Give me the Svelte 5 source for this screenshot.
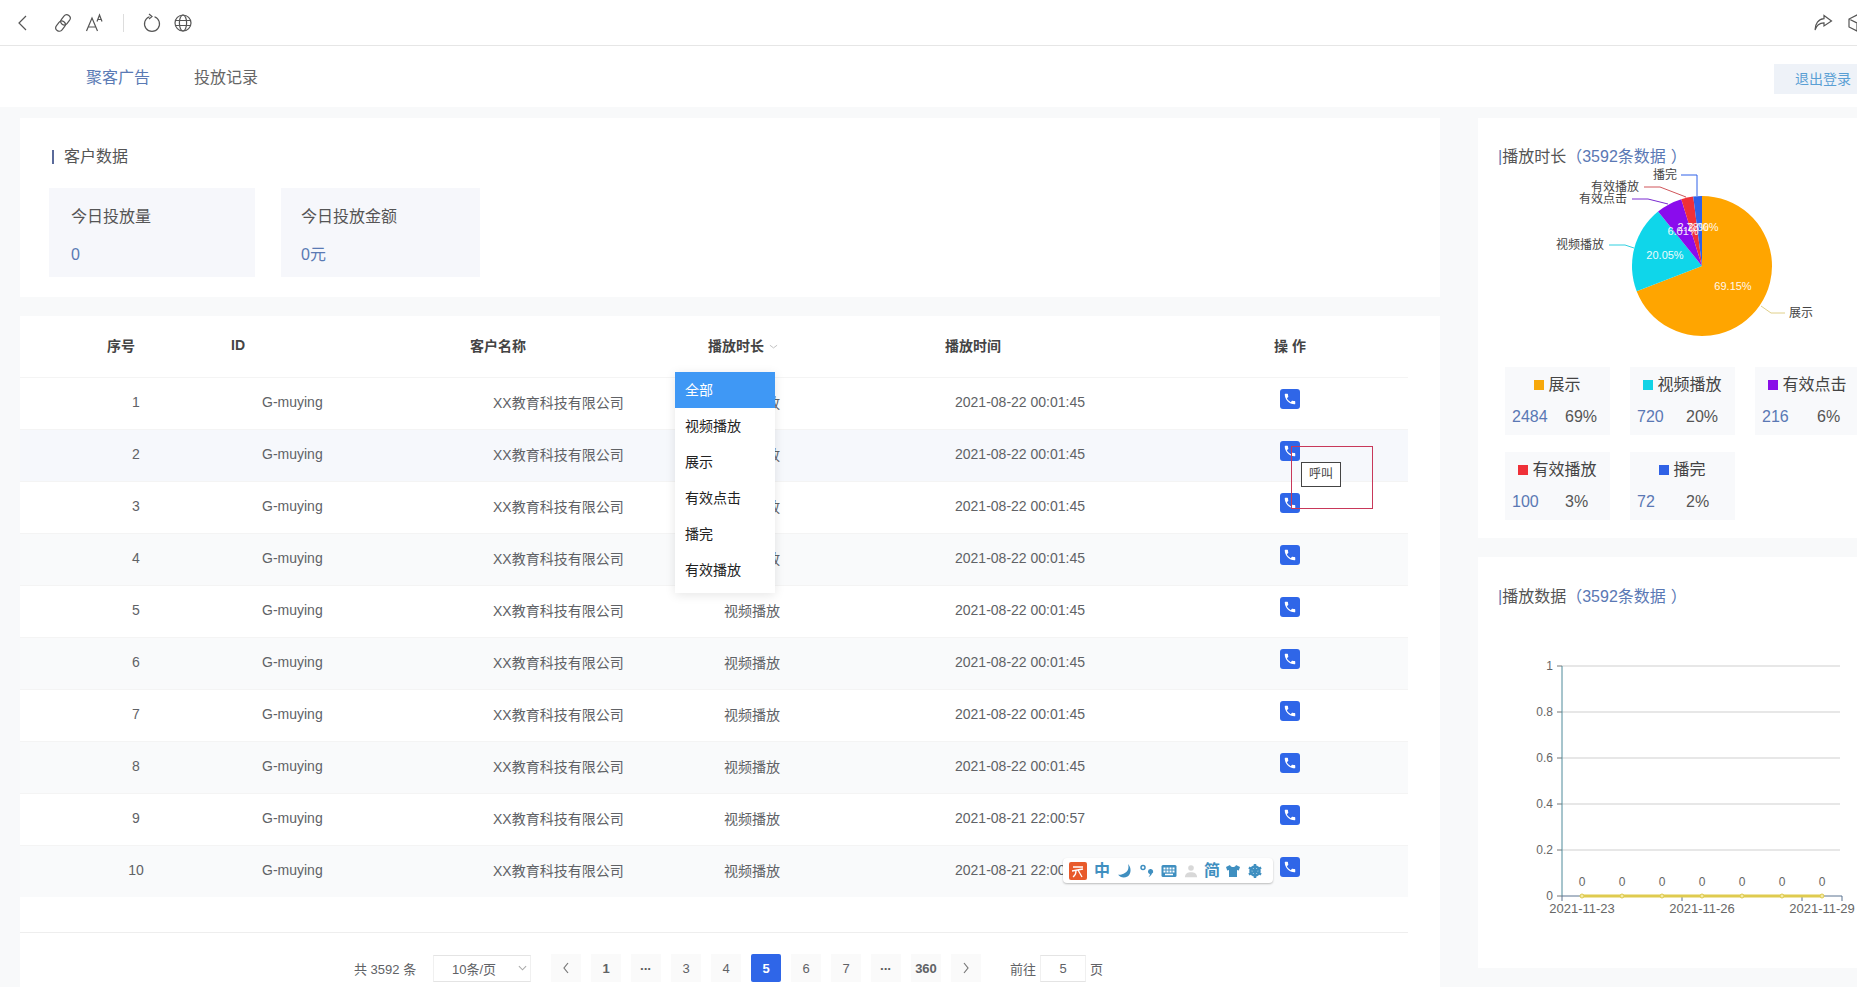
<script>
	const navItems = ['聚客广告', '投放记录'];
	const filterOptions = ['全部', '视频播放', '展示', '有效点击', '播完', '有效播放'];
	const pages = ['1', '•••', '3', '4', '5', '6', '7', '•••', '360'];

	const rows = Array.from({ length: 10 }, (_, i) => ({
		no: i + 1,
		time: i < 8 ? '2021-08-22 00:01:45' : '2021-08-21 22:00:57'
	}));

	const legend = [
		{ name: '展示', count: 2484, pct: '69%', color: '#f7a80b' },
		{ name: '视频播放', count: 720, pct: '20%', color: '#12d3e6' },
		{ name: '有效点击', count: 216, pct: '6%', color: '#8a0fe8' },
		{ name: '有效播放', count: 100, pct: '3%', color: '#ef3038' },
		{ name: '播完', count: 72, pct: '2%', color: '#3062e6' }
	];

	// pie slices, clockwise from 12 o'clock
	const cx = 1702;
	const cy = 266;
	const r = 70;
	const pieData = [
		{ value: 69.15, color: '#ffa500' },
		{ value: 20.05, color: '#0fd6ea' },
		{ value: 6.01, color: '#8a0ced' },
		{ value: 2.79, color: '#f03038' },
		{ value: 2.0, color: '#2f60e8' }
	];

	function point(pct) {
		const a = (pct / 100) * Math.PI * 2;
		return `${cx + r * Math.sin(a)} ${cy - r * Math.cos(a)}`;
	}

	let acc = 0;
	const slices = pieData.map((s) => {
		const from = acc;
		acc += s.value;
		const large = s.value > 50 ? 1 : 0;
		return { color: s.color, d: `M${cx} ${cy}L${point(from)}A${r} ${r} 0 ${large} 1 ${point(acc)}Z` };
	});

	const pieLabels = [
		{ text: '69.15%', x: 1733, y: 290 },
		{ text: '20.05%', x: 1665, y: 259 },
		{ text: '6.01%', x: 1683, y: 235 },
		{ text: '2.78%', x: 1693, y: 231 },
		{ text: '2.00%', x: 1703, y: 231 }
	];

	const pieLeaders = [
		{ text: '播完', x: 1677, y: 175, color: '#2f60e8', line: '1681,175 1697,175 1697,196', anchor: 'end' },
		{ text: '有效播放', x: 1639, y: 187, color: '#d0555a', line: '1644,187 1660,187 1686,197', anchor: 'end' },
		{ text: '有效点击', x: 1627, y: 199, color: '#7a2bd0', line: '1632,199 1648,199 1668,204', anchor: 'end' },
		{ text: '视频播放', x: 1604, y: 245, color: '#30d0e0', line: '1609,245 1625,245 1634,248', anchor: 'end' },
		{ text: '展示', x: 1789, y: 313, color: '#e0d08a', line: '1761,306 1771,313 1785,313', anchor: 'start' }
	];

	const yTicks = [
		{ label: '1', y: 666 },
		{ label: '0.8', y: 712 },
		{ label: '0.6', y: 758 },
		{ label: '0.4', y: 804 },
		{ label: '0.2', y: 850 },
		{ label: '0', y: 896 }
	];
	const points = [1582, 1622, 1662, 1702, 1742, 1782, 1822];
	const xLabels = [
		{ text: '2021-11-23', x: 1582 },
		{ text: '2021-11-26', x: 1702 },
		{ text: '2021-11-29', x: 1822 }
	];
</script>

{#snippet phone()}
	<span class="phone">
		<svg viewBox="0 0 24 24" width="14" height="14">
			<path
				fill="#fff"
				d="M6.62 10.79c1.44 2.83 3.76 5.14 6.59 6.59l2.2-2.2c.27-.27.67-.36 1.02-.24 1.12.37 2.33.57 3.57.57.55 0 1 .45 1 1V20c0 .55-.45 1-1 1-9.39 0-17-7.61-17-17 0-.55.45-1 1-1h3.5c.55 0 1 .45 1 1 0 1.25.2 2.45.57 3.57.11.35.03.74-.25 1.02l-2.2 2.2z"
			/>
		</svg>
	</span>
{/snippet}

<div class="page">
	<header class="toolbar">
		<div class="tools">
			<svg class="tool back" viewBox="0 0 16 20" width="16" height="20"><path d="M11 3 4 10l7 7" /></svg>
			<svg class="tool link" viewBox="0 0 20 20" width="20" height="20">
				<g transform="rotate(-52 10 10)">
					<rect x="0.500" y="6.500" width="11" height="7" rx="3.500" />
					<rect x="8.500" y="6.500" width="11" height="7" rx="3.500" />
				</g>
			</svg>
			<svg class="tool font" viewBox="0 0 20 20" width="20" height="20">
				<path d="M1.500 18 7 5l5.500 13M3.500 14h7" />
				<path d="M12 8.500 14.500 2 17 8.500M13 6.500h3" />
			</svg>
			<span class="sep"></span>
			<svg class="tool refresh" viewBox="0 0 20 20" width="20" height="20">
				<path d="M7.500 3.800a7.500 7.500 0 1 0 5 0" />
				<path d="M7 1l3 2.600L7 6" />
			</svg>
			<svg class="tool globe" viewBox="0 0 20 20" width="20" height="20">
				<circle cx="10" cy="10" r="8" />
				<ellipse cx="10" cy="10" rx="3.600" ry="8" />
				<path d="M2 7.500h16M2 12.500h16" />
			</svg>
		</div>
		<div class="tools-right">
			<svg class="tool share" viewBox="0 0 20 20" width="20" height="20">
				<path d="M11 2.500 18.500 8 11 13v-3.200C6.500 9.800 3.500 12 2 17 2 10.500 5.500 6 11 5.600z" />
			</svg>
			<svg class="tool cube" viewBox="0 0 20 20" width="20" height="20">
				<path d="M10 2 18 6v8l-8 4-8-4V6zM2 6l8 4 8-4M10 10v8" />
			</svg>
		</div>
	</header>

	<nav class="nav">
		<div class="nav-links">
			{#each navItems as item, i}
				<span class:active={i === 0}>{item}</span>
			{/each}
		</div>
		<button class="logout">退出登录</button>
	</nav>

	<main class="content">
		<div class="left">
			<section class="card summary">
				<h3 class="summary-title">客户数据</h3>
				<div class="stats">
					<div class="stat first">
						<div class="stat-label">今日投放量</div>
						<div class="stat-value">0</div>
					</div>
					<div class="stat second">
						<div class="stat-label">今日投放金额</div>
						<div class="stat-value">0元</div>
					</div>
				</div>
			</section>

			<section class="card table-card">
				<div class="thead">
					<span>序号</span>
					<span>ID</span>
					<span>客户名称</span>
					<span class="filter-head">
						播放时长
						<svg viewBox="0 0 10 6" width="9" height="6"><path d="M1 1l4 3 4-3" /></svg>
						<div class="dropdown">
							{#each filterOptions as option, i}
								<div class="option" class:selected={i === 0}>{option}</div>
							{/each}
						</div>
					</span>
					<span>播放时间</span>
					<span>操 作</span>
				</div>
				<div class="tbody">
					{#each rows as row}
						<div class="row">
							<span class="no">{row.no}</span>
							<span>G-muying</span>
							<span>XX教育科技有限公司</span>
							<span>视频播放</span>
							<span>{row.time}</span>
							<span class="actions">
								{@render phone()}
								{#if row.no === 2}
									<div class="call-hint"><span class="call-tip">呼叫</span></div>
								{/if}
							</span>
						</div>
					{/each}
					<div class="ime">
						<span class="ime-logo">
							<svg viewBox="0 0 18 18" width="18" height="18">
								<path d="M4 5h10M3 9l11-2M7 9c0 3-1.500 5-3 6M9 8l4 7" />
							</svg>
						</span>
						<span class="ime-char zh">中</span>
						<svg class="ime-icon moon" viewBox="0 0 16 16" width="16" height="16">
							<path d="M11 1c1.500 4.500-.5 9-6.500 10.500C2.800 12 1.800 11.800 1 11.500 3 14.500 7 15.500 10.500 13.500 14.500 11 14.500 4.500 11 1z" />
						</svg>
						<svg class="ime-icon" viewBox="0 0 16 16" width="16" height="16">
							<circle cx="4" cy="4.500" r="2" fill="none" stroke="#3f8fc0" stroke-width="1.500" />
							<path d="M9 8.500a2.600 2.600 0 1 1 3.800 2.300c-.4 1.300-1.500 2.600-3.300 3.200 1-1 1.500-1.900 1.400-2.900-1-.2-1.900-1.200-1.900-2.600z" />
						</svg>
						<svg class="ime-icon keyboard" viewBox="0 0 16 14" width="16" height="14">
							<rect x="0.500" y="1" width="15" height="12" rx="1.500" />
							<path fill="#fff" d="M2.500 3.500h2v2h-2zM5.500 3.500h2v2h-2zM8.500 3.500h2v2h-2zM11.500 3.500h2v2h-2zM2.500 6.500h2v2h-2zM5.500 6.500h2v2h-2zM8.500 6.500h2v2h-2zM11.500 6.500h2v2h-2zM4 9.800h8v1.400H4z" />
						</svg>
						<svg class="ime-icon person" viewBox="0 0 16 16" width="14" height="14">
							<circle cx="8" cy="4.500" r="3.200" />
							<path d="M1 15c.5-4 3-5.500 7-5.500s6.500 1.500 7 5.500z" />
						</svg>
						<span class="ime-char jian">简</span>
						<svg class="ime-icon" viewBox="0 0 16 16" width="16" height="16">
							<path d="M5 2 1 4l1.200 3.500L4 7v7h8V7l1.800.5L15 4l-4-2c-.5 1.500-1.500 2-3 2s-2.500-.5-3-2z" />
						</svg>
						<svg class="ime-icon gear" viewBox="0 0 16 16" width="16" height="16">
							<circle cx="8" cy="8" r="4.500" />
							<path d="M8 1v14M1.900 4.500l12.200 7M1.900 11.500l12.200-7" />
						</svg>
					</div>
				</div>
				<footer class="pager">
					<span class="total">共 3592 条</span>
					<span class="size">
						10条/页
						<svg viewBox="0 0 10 6" width="9" height="6"><path d="M1 1l4 4 4-4" /></svg>
					</span>
					<div class="pages">
						<span class="arrow">
							<svg viewBox="0 0 8 12" width="8" height="12"><path d="M6 1 2 6l4 5" /></svg>
						</span>
						{#each pages as p}
							<span class="pg" class:current={p === '5'} class:strong={p === '1' || p === '360'} class:dots={p === '•••'}>{p}</span>
						{/each}
						<span class="arrow">
							<svg viewBox="0 0 8 12" width="8" height="12"><path d="M2 1l4 5-4 5" /></svg>
						</span>
					</div>
					<span class="goto">前往</span>
					<span class="goto-input">5</span>
					<span class="goto-end">页</span>
				</footer>
			</section>
		</div>

		<aside class="right">
			<section class="card pie-card">
				<h3 class="side-title"><i>|</i>播放时长<em>（<span>3592条数据</span>）</em></h3>
				<svg class="chart" viewBox="1478 168 379 199" width="379" height="199">
					{#each slices as s}
						<path d={s.d} fill={s.color} />
					{/each}
					{#each pieLabels as l}
						<text x={l.x} y={l.y} text-anchor="middle" class="pie-value">{l.text}</text>
					{/each}
					{#each pieLeaders as l}
						<polyline points={l.line} fill="none" stroke={l.color} />
						<text x={l.x} y={l.y + 4} text-anchor={l.anchor} class="pie-name">{l.text}</text>
					{/each}
				</svg>
				<div class="legend">
					{#each legend as item}
						<div class="legend-box">
							<div class="legend-head"><i style="background: {item.color}"></i>{item.name}</div>
							<div class="legend-row"><b>{item.count}</b><span>{item.pct}</span></div>
						</div>
					{/each}
				</div>
			</section>

			<section class="card line-card">
				<h3 class="side-title"><i>|</i>播放数据<em>（<span>3592条数据</span>）</em></h3>
				<svg class="chart" viewBox="1478 608 379 360" width="379" height="360">
					{#each yTicks as t}
						{#if t.y !== 896}
							<line x1="1562" x2="1840" y1={t.y} y2={t.y} stroke="#cfcfcf" />
						{/if}
						<line x1="1557" x2="1562" y1={t.y} y2={t.y} stroke="#777" />
						<text x="1553" y={t.y + 4} text-anchor="end" class="axis-text">{t.label}</text>
					{/each}
					<line x1="1562" x2="1562" y1="666" y2="896" stroke="#4e8a9a" />
					<line x1="1562" x2="1842" y1="896" y2="896" stroke="#5a7390" />
					{#each [1562, 1682, 1802, 1842] as x}
						<line x1={x} x2={x} y1="896" y2="901" stroke="#5a7390" />
					{/each}
					<polyline points={points.map((x) => `${x},896`).join(' ')} fill="none" stroke="#dfcb4f" stroke-width="3" />
					{#each points as x}
						<circle cx={x} cy="896" r="2" fill="#f3e9a4" stroke="#dfcb4f" />
						<text x={x} y="886" text-anchor="middle" class="axis-text">0</text>
					{/each}
					{#each xLabels as l}
						<text x={l.x} y="913" text-anchor="middle" class="axis-date">{l.text}</text>
					{/each}
				</svg>
			</section>
		</aside>
	</main>
</div>

<style>
	:global(body) {
		margin: 0;
		background: #f8f9fa;
		overflow: hidden;
	}

	.page {
		width: 1857px;
		height: 987px;
		overflow: hidden;
		font-family: 'Liberation Sans', 'Noto Sans CJK SC', sans-serif;
		font-size: 14px;
		color: #606266;
	}

	/* browser chrome */
	.toolbar {
		height: 45px;
		background: #fff;
		border-bottom: 1px solid #e6e6e6;
		display: flex;
		align-items: center;
		justify-content: space-between;
	}
	.tools,
	.tools-right {
		display: flex;
		align-items: center;
	}
	.tool {
		fill: none;
		stroke: #555;
		stroke-width: 1.200;
	}
	.back {
		margin-left: 15px;
	}
	.link {
		margin-left: 22px;
	}
	.font {
		margin-left: 12px;
	}
	.sep {
		width: 1px;
		height: 18px;
		background: #ddd;
		margin: 0 18px;
	}
	.globe {
		margin-left: 11px;
	}
	.tools-right {
		width: 44px;
		gap: 14px;
		overflow: hidden;
	}
	.tools-right svg {
		flex: none;
	}

	.nav {
		height: 61px;
		background: #fff;
		display: flex;
		align-items: center;
		justify-content: space-between;
	}
	.nav-links {
		display: flex;
		gap: 44px;
		padding-left: 86px;
		font-size: 16px;
		margin-bottom: 1px;
		color: #666;
	}
	.nav-links .active {
		color: #5a7ab4;
	}
	.logout {
		width: 83px;
		height: 30px;
		border: 0;
		padding: 0 0 2px 21px;
		margin-top: 4px;
		text-align: left;
		white-space: nowrap;
		background: #eef2f8;
		color: #5a9fd4;
		font: inherit;
	}

	.content {
		display: flex;
		gap: 38px;
		padding: 11px 0 0 20px;
	}
	.left {
		width: 1420px;
		flex: none;
	}
	.right {
		width: 379px;
		flex: none;
	}
	.card {
		background: #fff;
	}

	.summary {
		height: 179px;
		margin-bottom: 19px;
		padding: 28px 0 0 29px;
		box-sizing: border-box;
	}
	.summary-title {
		margin: 0;
		height: 22px;
		line-height: 22px;
		font-size: 16px;
		font-weight: 400;
		color: #555;
		display: flex;
		align-items: center;
		gap: 10px;
		padding-left: 3px;
	}
	.summary-title::before {
		content: '';
		width: 2px;
		height: 14px;
		background: #5a6a9a;
	}
	.stats {
		display: flex;
		gap: 26px;
		margin-top: 20px;
	}
	.stat {
		height: 89px;
		background: #f6f7fb;
		padding: 18px 0 0 22px;
		box-sizing: border-box;
	}
	.stat.first {
		width: 206px;
	}
	.stat.second {
		width: 199px;
		padding-left: 20px;
	}
	.stat-label {
		font-size: 16px;
		line-height: 22px;
		color: #555;
	}
	.stat-value {
		font-size: 16px;
		line-height: 22px;
		margin-top: 16px;
		color: #5a7ab4;
	}

	.table-card {
		height: 671px;
		display: flex;
		flex-direction: column;
	}
	.thead {
		height: 61px;
		padding-left: 87px;
		padding-bottom: 3px;
		box-sizing: border-box;
		display: grid;
		grid-template-columns: 124px 239px 238px 237px 329px 1fr;
		align-items: center;
		font-weight: 700;
		color: #444;
	}
	.filter-head {
		position: relative;
		white-space: nowrap;
	}
	.filter-head svg {
		fill: none;
		stroke: #bbb;
		stroke-width: 1;
		margin-left: 1px;
		vertical-align: middle;
	}
	.dropdown {
		position: absolute;
		left: -33px;
		top: 37px;
		width: 100px;
		height: 221px;
		background: #fff;
		box-shadow: 0 2px 10px rgba(0, 0, 0, 0.1);
		font-weight: 400;
		color: #222;
		z-index: 5;
	}
	.option {
		height: 36px;
		line-height: 36px;
		padding-left: 10px;
	}
	.option.selected {
		background: #3f98f5;
		color: #fff;
	}

	.tbody {
		position: relative;
		width: 1388px;
		height: 555px;
		border-bottom: 1px solid #eee;
	}
	.row {
		height: 52px;
		padding-bottom: 4px;
		display: grid;
		grid-template-columns: 242px 231px 231px 231px 325px 1fr;
		align-items: center;
		border-top: 1px solid #f4f4f4;
		box-sizing: border-box;
	}
	.row:nth-child(even) {
		background: #f9fafb;
	}
	.row:nth-child(2) {
		background: #f6f8fc;
	}
	.no {
		text-align: center;
		padding-right: 10px;
	}
	.actions {
		position: relative;
		height: 20px;
		margin-top: -6px;
	}
	.phone {
		display: flex;
		align-items: center;
		justify-content: center;
		width: 20px;
		height: 20px;
		border-radius: 3px;
		background: #2f66e8;
	}
	.call-hint {
		position: absolute;
		left: 11px;
		top: 5px;
		width: 82px;
		height: 63px;
		box-sizing: border-box;
		border: 1px solid #c8385a;
		z-index: 3;
	}
	.call-tip {
		position: absolute;
		left: 9px;
		top: 15px;
		width: 40px;
		height: 25px;
		box-sizing: border-box;
		border: 1px solid #444;
		background: #fff;
		font-size: 12px;
		line-height: 23px;
		text-align: center;
		color: #444;
	}

	.ime {
		position: absolute;
		left: 1043px;
		top: 481px;
		width: 210px;
		height: 25px;
		background: #fff;
		border-radius: 4px;
		box-shadow: 0 1px 2px rgba(0, 0, 0, 0.25);
		display: flex;
		align-items: center;
		padding-left: 6px;
		box-sizing: border-box;
		z-index: 4;
	}
	.ime-logo {
		width: 18px;
		height: 18px;
		flex: none;
		border-radius: 2px;
		background: #e85a2a;
	}
	.ime-logo svg {
		fill: none;
		stroke: #fff;
		stroke-width: 1.300;
		display: block;
	}
	.ime-char {
		flex: none;
		font-size: 16px;
		font-weight: 700;
		color: #3f8fc0;
		line-height: 1;
	}
	.zh {
		margin: 0 7px 0 7px;
	}
	.jian {
		margin: 0 5px 0 6px;
	}
	.ime-icon {
		flex: none;
		margin-right: 6px;
		fill: #3f8fc0;
	}
	.person {
		fill: #d8d8d8;
		margin-right: 0;
		margin-left: 1px;
	}
	.gear {
		stroke: #3f8fc0;
		stroke-width: 2.500;
		fill: none;
	}

	.pager {
		flex: 1;
		display: flex;
		align-items: center;
		font-size: 13px;
		padding-left: 334px;
		padding-top: 16px;
		box-sizing: border-box;
	}
	.total {
		width: 79px;
		flex: none;
	}
	.size {
		width: 98px;
		height: 27px;
		flex: none;
		box-sizing: border-box;
		border-top: 1px solid #e4e4e4;
		border-bottom: 1px solid #e4e4e4;
		border-left: 1px solid #f0f0f0;
		border-right: 1px solid #f0f0f0;
		display: flex;
		align-items: center;
		padding-left: 18px;
		gap: 22px;
	}
	.size svg,
	.arrow svg {
		fill: none;
		stroke: #aaa;
		stroke-width: 1.200;
	}
	.arrow svg {
		stroke: #777;
	}
	.pages {
		display: flex;
		gap: 10px;
		margin-left: 20px;
	}
	.pg,
	.arrow {
		width: 30px;
		height: 28px;
		display: flex;
		align-items: center;
		justify-content: center;
		background: #fafafa;
		color: #606266;
	}
	.pg.strong {
		font-weight: 700;
	}
	.pg.dots {
		font-size: 8px;
		letter-spacing: 0.8px;
		color: #555;
	}
	.pg.current {
		background: #2f66e8;
		color: #fff;
		font-weight: 700;
		border-radius: 2px;
	}
	.goto {
		margin-left: 29px;
		white-space: nowrap;
	}
	.goto-input {
		width: 46px;
		height: 27px;
		margin-left: 4px;
		flex: none;
		box-sizing: border-box;
		border-top: 1px solid #e4e4e4;
		border-bottom: 1px solid #e4e4e4;
		border-left: 1px solid #f0f0f0;
		border-right: 1px solid #f0f0f0;
		display: flex;
		align-items: center;
		justify-content: center;
	}
	.goto-end {
		margin-left: 4px;
	}

	.pie-card {
		height: 420px;
		margin-bottom: 19px;
		padding-top: 28px;
		box-sizing: border-box;
		overflow: hidden;
	}
	.line-card {
		height: 411px;
		padding-top: 29px;
		box-sizing: border-box;
		overflow: hidden;
	}
	.side-title {
		margin: 0 0 0 20px;
		height: 22px;
		line-height: 22px;
		font-size: 16px;
		font-weight: 400;
		color: #555;
	}
	.side-title i {
		font-style: normal;
		color: #5a78b4;
	}
	.side-title em {
		font-style: normal;
		color: #5a78b4;
	}
	.side-title em span {
		margin-right: 5px;
	}
	.chart {
		display: block;
	}
	.pie-value {
		font-size: 11px;
		fill: #fff;
		opacity: 0.92;
	}
	.pie-name {
		font-size: 12px;
		fill: #444;
	}
	.axis-text {
		font-size: 12px;
		fill: #666;
	}
	.axis-date {
		font-size: 13px;
		fill: #666;
	}

	.legend {
		display: grid;
		grid-template-columns: repeat(3, 105px);
		gap: 17px 20px;
		margin-left: 27px;
	}
	.legend-box {
		height: 68px;
		background: #f8f9fb;
		padding-top: 7px;
		box-sizing: border-box;
	}
	.legend-head {
		height: 22px;
		line-height: 22px;
		font-size: 16px;
		color: #444;
		display: flex;
		align-items: center;
		justify-content: center;
		gap: 4px;
	}
	.legend-head i {
		width: 10px;
		height: 10px;
		flex: none;
	}
	.legend-row {
		margin-top: 10px;
		height: 22px;
		line-height: 22px;
		font-size: 16px;
		padding-left: 7px;
		display: grid;
		grid-template-columns: 53px 1fr;
		color: #555;
	}
	.legend-box:nth-child(3n + 2) .legend-row {
		grid-template-columns: 49px 1fr;
	}
	.legend-box:nth-child(3) .legend-row {
		grid-template-columns: 55px 1fr;
	}
	.legend-row b {
		font-weight: 400;
		color: #5a78b4;
	}
</style>
